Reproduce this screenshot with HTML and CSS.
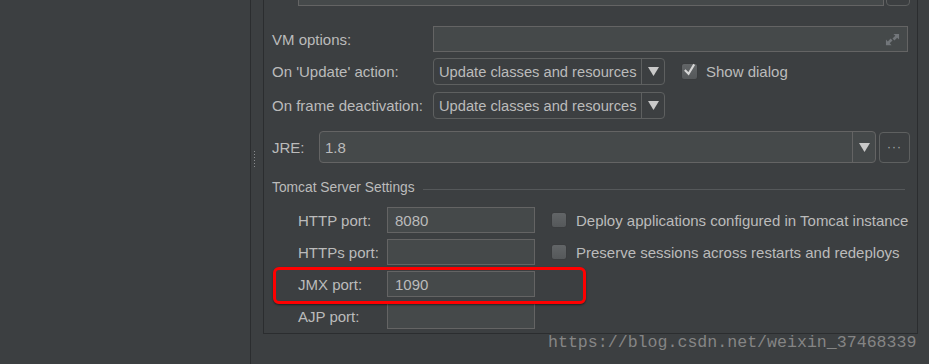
FILE: index.html
```html
<!DOCTYPE html>
<html lang="en">
<head>
    <meta charset="UTF-8">
    <title>Run/Debug Configurations</title>
    <link rel="stylesheet" href="styles.css">
</head>
<body>
    <aside class="tree"></aside>
    <div class="splitter"><span class="grip"></span></div>
    <main class="config">
        <div class="box">
            <div class="top-row">
                <div class="field wide-top"></div>
                <div class="small-btn"></div>
            </div>

            <div class="opt-row first">
                <label class="opt-label">VM options:</label>
                <div class="field vm-field">
                    <svg class="expand" viewBox="0 0 16 16">
                        <polygon points="9,2 15,2 15,8 13,6 10,9 8,7 11,4" />
                        <polygon points="1,8 1,14 7,14 5,12 8,9 6,7 3,10" />
                    </svg>
                </div>
            </div>
            <div class="opt-row second">
                <label class="opt-label">On 'Update' action:</label>
                <div class="combo">
                    <span class="combo-text">Update classes and resources</span>
                    <span class="combo-arrow"><svg viewBox="0 0 10 8"><polygon points="0,0 10,0 5,8" /></svg></span>
                </div>
                <div class="check checked">
                    <span class="box-mark"><svg viewBox="0 0 16 16"><path d="M3 8 L7 12 L13 2" /></svg></span>
                    <span>Show dialog</span>
                </div>
            </div>
            <div class="opt-row third">
                <label class="opt-label">On frame deactivation:</label>
                <div class="combo">
                    <span class="combo-text">Update classes and resources</span>
                    <span class="combo-arrow"><svg viewBox="0 0 10 8"><polygon points="0,0 10,0 5,8" /></svg></span>
                </div>
            </div>

            <div class="jre-row">
                <label class="jre-label">JRE:</label>
                <div class="combo jre-combo">
                    <span class="combo-text">1.8</span>
                    <span class="combo-arrow"><svg viewBox="0 0 10 8"><polygon points="0,0 10,0 5,8" /></svg></span>
                </div>
                <div class="dots-btn">&middot;&middot;&middot;</div>
            </div>

            <div class="section-title">
                <span>Tomcat Server Settings</span>
                <span class="rule"></span>
            </div>

            <div class="tomcat">
                <div class="port-row">
                    <label class="port-label">HTTP port:</label>
                    <div class="field port-field">8080</div>
                    <div class="check">
                        <span class="box-mark"></span>
                        <span>Deploy applications configured in Tomcat instance</span>
                    </div>
                </div>
                <div class="port-row">
                    <label class="port-label">HTTPs port:</label>
                    <div class="field port-field"></div>
                    <div class="check">
                        <span class="box-mark"></span>
                        <span>Preserve sessions across restarts and redeploys</span>
                    </div>
                </div>
                <div class="port-row">
                    <label class="port-label">JMX port:</label>
                    <div class="field port-field">1090</div>
                </div>
                <div class="port-row">
                    <label class="port-label">AJP port:</label>
                    <div class="field port-field"></div>
                </div>
                <div class="highlight"></div>
            </div>
        </div>
        <div class="watermark">https://blog.csdn.net/weixin_37468339</div>
    </main>
</body>
</html>
```

FILE: styles.css
```css
body {
    margin: 0;
    height: 364px;
    overflow: hidden;
    display: flex;
    background-color: #3c3f41;
    color: #bbbbbb;
    font-family: "Liberation Sans", Arial, sans-serif;
    font-size: 15px;
}
.tree {
    width: 250px;
    flex: none;
    border-right: 1px solid #2b2d2f;
}
.splitter {
    width: 12px;
    flex: none;
    display: flex;
    align-items: flex-start;
    justify-content: center;
}
.grip {
    width: 3px;
    height: 18px;
    margin-top: 150px;
    margin-left: -5px;
    background-image: radial-gradient(circle, #8a8c8e 0.8px, transparent 1px);
    background-size: 3px 3px;
}
.config {
    flex: none;
    width: 667px;
    position: relative;
}
.box {
    box-sizing: border-box;
    width: 655px;
    height: 354px;
    border: 1px solid #2b2d2f;
    border-top: none;
    padding-left: 8px;
}
.field {
    box-sizing: border-box;
    height: 26px;
    background-color: #45494a;
    border: 1px solid #646464;
    color: #bbbbbb;
    display: flex;
    align-items: center;
    padding-left: 7px;
}
.top-row {
    display: flex;
    gap: 2px;
    margin-top: -20px;
    margin-left: 26px;
}
.wide-top {
    width: 586px;
}
.small-btn {
    box-sizing: border-box;
    width: 24px;
    height: 26px;
    border: 1px solid #5e6060;
    border-radius: 4px;
}
.opt-row {
    display: flex;
    align-items: center;
}
.opt-row.first {
    margin-top: 20px;
}
.opt-row.second {
    margin-top: 6px;
}
.opt-row.third {
    margin-top: 7px;
}
.opt-label {
    width: 161px;
    flex: none;
}
.vm-field {
    width: 475px;
    justify-content: flex-end;
    padding-right: 7px;
}
.expand {
    width: 15px;
    height: 15px;
    fill: #72767a;
}
.combo {
    box-sizing: border-box;
    width: 232px;
    height: 27px;
    flex: none;
    border: 1px solid #5e6060;
    border-radius: 4px;
    display: flex;
    align-items: stretch;
}
.combo-text {
    flex: 1;
    min-width: 0;
    display: flex;
    align-items: center;
    padding-left: 5px;
    font-size: 14.7px;
    white-space: nowrap;
    overflow: hidden;
}
.combo-arrow {
    width: 22px;
    flex: none;
    border-left: 1px solid #5e6060;
    display: flex;
    align-items: center;
    justify-content: center;
}
.combo-arrow svg {
    width: 11px;
    height: 9px;
    fill: #c9c9c9;
}
.check {
    display: flex;
    align-items: center;
    gap: 9px;
}
.opt-row .check {
    margin-left: 16px;
    gap: 8px;
}
.box-mark {
    box-sizing: border-box;
    width: 16px;
    height: 16px;
    border-radius: 3px;
    border: 1px solid #3a3c3e;
    background: linear-gradient(#626567, #55585a);
    display: flex;
    align-items: center;
    justify-content: center;
}
.checked .box-mark {
    width: 17px;
    height: 17px;
}
.box-mark svg {
    width: 16px;
    height: 16px;
    margin-top: -3px;
    fill: none;
    stroke: #d6d6d6;
    stroke-width: 2.2;
}
.jre-row {
    display: flex;
    align-items: center;
    margin-top: 12px;
}
.jre-label {
    width: 47px;
    flex: none;
}
.jre-combo {
    width: 557px;
    height: 32px;
    background-color: #45494a;
    border-color: #646464;
}
.jre-combo .combo-text {
    font-size: 15px;
}
.jre-combo .combo-arrow {
    border-left-color: #646464;
}
.dots-btn {
    box-sizing: border-box;
    width: 31px;
    height: 31px;
    margin-left: 3px;
    border: 1px solid #5e6060;
    border-radius: 4px;
    display: flex;
    align-items: center;
    justify-content: center;
    font-size: 12px;
    letter-spacing: 1px;
    color: #a9abad;
}
.section-title {
    display: flex;
    align-items: center;
    margin-top: 16px;
    height: 16px;
    font-size: 13.8px;
}
.rule {
    width: 482px;
    margin-left: 8px;
    margin-top: 5px;
    border-top: 1px solid #55585a;
}
.tomcat {
    position: relative;
    margin-top: 12px;
    padding-left: 26px;
    display: flex;
    flex-direction: column;
    gap: 6px;
}
.port-row {
    display: flex;
    align-items: center;
}
.port-label {
    width: 89px;
    flex: none;
}
.port-field {
    width: 148px;
}
.port-row .check {
    margin-left: 16px;
}
.highlight {
    position: absolute;
    left: 1px;
    top: 60px;
    width: 307px;
    height: 31px;
    border: 3px solid #ff0000;
    border-radius: 6px;
    box-shadow: 0 1px 2px rgba(0, 0, 0, 0.5);
}
.watermark {
    position: absolute;
    left: 285px;
    top: 333px;
    font-family: "Liberation Mono", "DejaVu Sans Mono", monospace;
    font-size: 16.6px;
    line-height: 20px;
    color: #858585;
}
```
